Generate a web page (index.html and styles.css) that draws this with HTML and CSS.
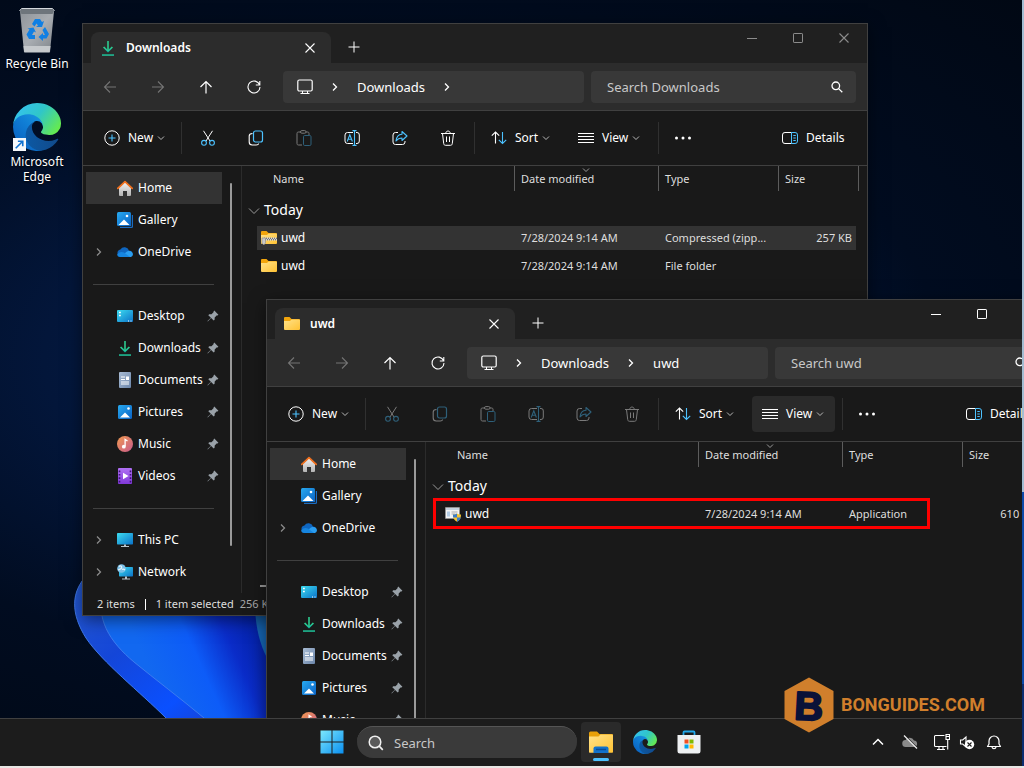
FILE: index.html
```html
<!DOCTYPE html>
<html lang="en">
<head>
<meta charset="utf-8">
<title>Desktop</title>
<link rel="stylesheet" href="styles.css">
</head>
<body>
<svg class="defs" aria-hidden="true">
  <defs>
    <linearGradient id="g-dl" x1="0" y1="0" x2="0" y2="1"><stop offset="0" stop-color="#2fcf8c"/><stop offset="1" stop-color="#12b3a0"/></linearGradient>
    <linearGradient id="g-folder" x1="0" y1="0" x2="1" y2="1"><stop offset="0" stop-color="#ffe28a"/><stop offset="1" stop-color="#ffc233"/></linearGradient>
    <linearGradient id="g-blue" x1="0" y1="0" x2="1" y2="1"><stop offset="0" stop-color="#28aaf0"/><stop offset="1" stop-color="#0a62c4"/></linearGradient>
    <linearGradient id="g-cyan" x1="0" y1="0" x2="1" y2="1"><stop offset="0" stop-color="#3ddcf0"/><stop offset="1" stop-color="#0b72c8"/></linearGradient>
    <linearGradient id="g-home" x1="0" y1="0" x2="0" y2="1"><stop offset="0" stop-color="#f2f2f2"/><stop offset="1" stop-color="#b4b4b4"/></linearGradient>
    <linearGradient id="g-music" x1="0" y1="0" x2="1" y2="1"><stop offset="0" stop-color="#f09a50"/><stop offset="1" stop-color="#c85a8c"/></linearGradient>
    <linearGradient id="g-video" x1="0" y1="0" x2="0" y2="1"><stop offset="0" stop-color="#b070f4"/><stop offset="1" stop-color="#8038d8"/></linearGradient>
    <linearGradient id="g-doc" x1="0" y1="0" x2="1" y2="1"><stop offset="0" stop-color="#a9bcd4"/><stop offset="1" stop-color="#6c86aa"/></linearGradient>
    <linearGradient id="g-e1" x1="0" y1="0.5" x2="1" y2="0.5"><stop offset="0" stop-color="#0c59a4"/><stop offset="1" stop-color="#114a8b"/></linearGradient>
    <linearGradient id="g-e2" x1="1" y1="0" x2="0.2" y2="1"><stop offset="0" stop-color="#1b9de2"/><stop offset="0.5" stop-color="#0f7cd4"/><stop offset="1" stop-color="#0a5fbd"/></linearGradient>
    <linearGradient id="g-e3" x1="0" y1="0.2" x2="1" y2="0.7"><stop offset="0" stop-color="#35c1f1"/><stop offset="0.5" stop-color="#30c6c8"/><stop offset="1" stop-color="#66eb4e"/></linearGradient>
    <linearGradient id="g-win" x1="0" y1="0" x2="1" y2="1"><stop offset="0" stop-color="#7ce8fc"/><stop offset="1" stop-color="#0a8ff0"/></linearGradient>
    <linearGradient id="g-bin" x1="0" y1="0" x2="1" y2="1"><stop offset="0" stop-color="#8e9399"/><stop offset="0.5" stop-color="#a9adb2"/><stop offset="1" stop-color="#7f848a"/></linearGradient>
    <linearGradient id="g-p2" x1="0" y1="0" x2="1" y2="1"><stop offset="0" stop-color="#2a5fd0"/><stop offset="0.4" stop-color="#1446d8"/><stop offset="0.7" stop-color="#0a50ff"/><stop offset="1" stop-color="#2238b0"/></linearGradient>
    <linearGradient id="g-p3" gradientUnits="userSpaceOnUse" x1="75" y1="110" x2="185" y2="60"><stop offset="0" stop-color="#1268f0"/><stop offset="0.4" stop-color="#0d5cf8"/><stop offset="0.7" stop-color="#0a2cc8"/><stop offset="1" stop-color="#0420a0"/></linearGradient>
  </defs>
  <symbol id="i-download" viewBox="0 0 16 16"><path d="M3.600 7 8 11.400 12.400 7" fill="none" stroke="url(#g-dl)" stroke-width="1.700"/><path d="M2 14.300h12v1.500H2z" fill="#1fc39a"/><path d="M7.200 1h1.600v10H7.200z" fill="#2ccc90"/></symbol>
  <symbol id="i-folder" viewBox="0 0 16 16"><path d="M0 2a1 1 0 0 1 1-1h4.500l2 2H15a1 1 0 0 1 1 1V8H0z" fill="#f2a50c"/><path d="M0 5h6l1.500-1.500H15a1 1 0 0 1 1 1V13a1 1 0 0 1-1 1H1a1 1 0 0 1-1-1z" fill="url(#g-folder)"/></symbol>
  <symbol id="i-zip" viewBox="0 0 16 16"><use href="#i-folder"/><path d="M2 9h14" stroke="#777" stroke-width="2.600"/><path d="M2 8.200h14M3 9.800h13" stroke="#f2f2f2" stroke-width="1.200" stroke-dasharray="1 1"/><path d="M1 8h3.500v5l-1.700 2L1 13z" fill="#c9c9c9" stroke="#888" stroke-width=".6"/></symbol>
  <symbol id="i-exe" viewBox="0 0 16 16"><path d="M.5 1.500h14v11H.5z" fill="#f4f4f4" stroke="#999" stroke-width=".6"/><path d="M1 2h13v2H1z" fill="#c6d2de"/><path d="M2 5.500h3v5H2z" fill="#b4cce4"/><path d="M6.500 6h6M6.500 8h4" stroke="#aaa"/><path d="M12 7.500c1.300 1 2.600 1 4 1 0 3.500-1.200 6-4 7.300-2.800-1.300-4-3.800-4-7.300 1.400 0 2.700 0 4-1z" fill="#f4c430"/><path d="M12 7.500v4H8.200A9 9 0 0 1 8 8.500c1.400 0 2.700 0 4-1zM12 11.500h3.800c-.6 2-1.800 3.500-3.800 4.300z" fill="#3b7bc8"/></symbol>
  <symbol id="i-home" viewBox="0 0 16 16"><path d="M2 7.500 8 2l6 5.500V15a1 1 0 0 1-1 1h-3v-5H6v5H3a1 1 0 0 1-1-1z" fill="url(#g-home)"/><path d="M.8 8.300 8 1.600l7.200 6.700" fill="none" stroke="#f0701e" stroke-width="1.800" stroke-linecap="round" stroke-linejoin="round"/></symbol>
  <symbol id="i-gallery" viewBox="0 0 16 16"><path d="M3 3h13v11.500a1.500 1.500 0 0 1-1.500 1.500H3z" fill="#1c6cc0"/><path d="M14.500 2v12.500H2" fill="none" stroke="#191919" stroke-width=".8"/><rect width="14" height="14" rx="1.500" fill="url(#g-blue)"/><path d="M1.500 13 7 7.500l5.500 5.500z" fill="#fff"/><circle cx="10" cy="4" r="1.300" fill="#fff"/></symbol>
  <symbol id="i-picture" viewBox="0 0 16 16"><rect x="1" y="1" width="14" height="14" rx="1.500" fill="url(#g-blue)"/><path d="M3 13.500 8 8.500l5 5z" fill="#fff"/><circle cx="11.500" cy="4.500" r="1.300" fill="#fff"/></symbol>
  <symbol id="i-cloud" viewBox="0 0 16 16"><path d="M4 13a3.800 3.800 0 0 1-.6-7.500A4.800 4.800 0 0 1 12 6.500a3.300 3.300 0 0 1 .6 6.500z" fill="#0f66c0"/><path d="M3 13 10 7.500c4.500-1.500 6.500 1.500 5.800 3.500-.4 1.400-1.400 2-3 2z" fill="#2a9df0"/><path d="M3.500 13C1 13 .2 11.500.2 10.500 2 7.500 5 7.500 7 8.500l6 4.500z" fill="#1685e0"/></symbol>
  <symbol id="i-desktop" viewBox="0 0 16 16"><rect y="2" width="16" height="12" rx="1" fill="url(#g-cyan)"/><path d="M2 4.500h1.800M2 7.500h1.800" stroke="#fff" stroke-width="1.600"/><path d="M11 13h1M13.500 13h1" stroke="#fff"/></symbol>
  <symbol id="i-doc" viewBox="0 0 16 16"><rect x="2" y="0" width="12" height="16" rx="1" fill="url(#g-doc)"/><path d="M4 5h4M4 7.500h4M4 10h8M4 12h8" stroke="#fff"/><path d="M9 4.500h3V8H9z" fill="#fff"/></symbol>
  <symbol id="i-music" viewBox="0 0 16 16"><circle cx="8" cy="8" r="8" fill="url(#g-music)"/><circle cx="6.800" cy="10.700" r="1.900" fill="#fff"/><path d="M8.100 10.500V3.500l2.400 1.500" fill="none" stroke="#fff" stroke-width="1.300"/></symbol>
  <symbol id="i-video" viewBox="0 0 16 16"><rect x="1" width="14" height="16" rx="1" fill="url(#g-video)"/><path d="M2.500 2.500v12M13.500 2.500v12" stroke="#3d1572" stroke-width="1.600" stroke-dasharray="1.700 1.700"/><path d="M6 4.800 11.500 8 6 11.200z" fill="#fff"/></symbol>
  <symbol id="i-pc" viewBox="0 0 16 16"><rect y="1" width="16" height="11.500" rx=".7" fill="url(#g-cyan)"/><path d="M7 12.500h2V14H7zM4 14h8v1H4z" fill="#b9c4cc"/></symbol>
  <symbol id="i-network" viewBox="0 0 16 16"><rect x="2" y="3" width="14" height="9.500" rx=".7" fill="url(#g-cyan)"/><path d="M8 12.500h2V14.500H8zM5 14.500h8v1H5z" fill="#b9c4cc"/><circle cx="4.500" cy="4.500" r="4.300" fill="#7cc0e8"/><path d="M2 2.500c2-1.500 3 0 2.500 1.500S2 5 1 6M5 5.500c1-.5 2.500 0 3 .5" stroke="#e4f4fc" stroke-width="1.300" fill="none"/></symbol>
  <symbol id="i-pin" viewBox="0 0 12 12"><path d="M7.300.6 11.400 4.700 10.600 5.500 9.900 5.300 7.700 7.500 7.600 9.700 6.700 10.600 4.100 8 .8 11.400.5 11.100 3.900 7.800 1.300 5.200 2.200 4.300 4.500 4.200 6.700 2 6.500 1.400z" fill="#9aa2a9"/></symbol>
  <symbol id="i-right" viewBox="0 0 8 12"><path d="m2 2.500 3.500 3.500L2 9.500" fill="none" stroke="currentColor" stroke-width="1.300"/></symbol>
  <symbol id="i-down" viewBox="0 0 8 8"><path d="m1 2.500 3 3 3-3" fill="none" stroke="currentColor"/></symbol>
  <symbol id="i-close" viewBox="0 0 12 12"><path d="m1.500 1.500 9 9m0-9-9 9" stroke="currentColor" stroke-width="1.100"/></symbol>
  <symbol id="i-plus" viewBox="0 0 12 12"><path d="M6 .5v11M.5 6h11" stroke="currentColor"/></symbol>
  <symbol id="i-min" viewBox="0 0 12 12"><path d="M1 6.500h10" stroke="currentColor"/></symbol>
  <symbol id="i-max" viewBox="0 0 12 12"><rect x="1.500" y="1.500" width="9" height="9" rx=".6" fill="none" stroke="currentColor"/></symbol>
  <symbol id="i-back" viewBox="0 0 16 16"><path d="M14 8H2.500M8 2.500 2.500 8 8 13.500" fill="none" stroke="currentColor" stroke-width="1.100"/></symbol>
  <symbol id="i-fwd" viewBox="0 0 16 16"><path d="M2 8h11.500M8 2.500 13.500 8 8 13.500" fill="none" stroke="currentColor" stroke-width="1.100"/></symbol>
  <symbol id="i-up" viewBox="0 0 16 16"><path d="M8 14.500V2.500M2.500 8 8 2.500 13.500 8" fill="none" stroke="currentColor" stroke-width="1.200"/></symbol>
  <symbol id="i-refresh" viewBox="0 0 16 16"><path d="M13.600 5.800A6 6 0 1 0 14 8M13.800 2v4h-4" fill="none" stroke="currentColor" stroke-width="1.100"/></symbol>
  <symbol id="i-monitor" viewBox="0 0 16 16"><rect x=".8" y="1" width="14.400" height="11" rx="1.500" fill="none" stroke="currentColor" stroke-width="1.200"/><path d="M5.500 12v2.500M10.500 12v2.500M3.500 14.500h9" stroke="currentColor" fill="none"/></symbol>
  <symbol id="i-search" viewBox="0 0 12 12"><circle cx="4.800" cy="4.800" r="3.800" fill="none" stroke="currentColor" stroke-width="1.300"/><path d="m7.600 7.600 3.700 3.700" stroke="currentColor" stroke-width="1.300"/></symbol>
  <symbol id="i-new" viewBox="0 0 16 16"><circle cx="8" cy="8" r="7.200" fill="none" stroke="currentColor"/><path d="M8 4.500v7M4.500 8h7" stroke="#4cc2ff" stroke-width="1.100"/></symbol>
  <symbol id="i-cut" viewBox="0 0 16 16"><path d="M3.500.8 10 11M12.500.8 6 11" stroke="currentColor" fill="none"/><circle cx="4" cy="12.800" r="2.400" fill="none" stroke="#4cc2ff" stroke-width="1.100"/><circle cx="12" cy="12.800" r="2.400" fill="none" stroke="#4cc2ff" stroke-width="1.100"/></symbol>
  <symbol id="i-copy" viewBox="0 0 16 16"><path d="M4.500 3.500C2 3.500 1.200 4.500 1.200 6v6c0 2 1 3 3 3h4c1.500 0 2.300-.5 2.500-1.500" fill="none" stroke="currentColor" stroke-width="1.100"/><rect x="5.500" y="1" width="9" height="11" rx="2" fill="none" stroke="#4cc2ff" stroke-width="1.200"/></symbol>
  <symbol id="i-paste" viewBox="0 0 16 16"><path d="M5 2H2.500C1.500 2 1 2.500 1 3.500v10c0 1 .5 1.500 1.500 1.500H6M10 2h1.500c1 0 1.500.5 1.500 1.500V5" fill="none" stroke="currentColor"/><rect x="4.500" y=".6" width="5.500" height="2.600" rx="1.300" fill="none" stroke="currentColor"/><rect x="7.500" y="5.500" width="7.500" height="10" rx="1.200" fill="none" stroke="#4cc2ff"/></symbol>
  <symbol id="i-rename" viewBox="0 0 16 16"><path d="M9 2.500H3.500A2.500 2.500 0 0 0 1 5v6a2.500 2.500 0 0 0 2.500 2.500H9M12 2.500h1A2.300 2.300 0 0 1 15.300 5v6a2.300 2.300 0 0 1-2.300 2.500h-1" fill="none" stroke="currentColor"/><path d="M10.500 1v14M8.500.6h4M8.500 15.400h4M3.200 11.500 5.800 4.800l2.600 6.700M4.200 9.300h3.200" fill="none" stroke="#4cc2ff" stroke-width="1.100"/></symbol>
  <symbol id="i-share" viewBox="0 0 16 16"><path d="M6 2.500H3.500A2.500 2.500 0 0 0 1 5v7a2.500 2.500 0 0 0 2.500 2.500h7A2.500 2.500 0 0 0 13 12v-1" fill="none" stroke="currentColor"/><path d="M10 1.500 15 6l-5 4.500V8c-3 0-4.500 1-6 3 .3-3.500 2-6.500 6-6.800z" fill="none" stroke="#4cc2ff" stroke-width="1.100" stroke-linejoin="round"/></symbol>
  <symbol id="i-trash" viewBox="0 0 16 16"><path d="M1 3.500h14M5.800 3.300c0-3 4.400-3 4.400 0M2.500 3.500l1.200 10c.1 1.200.8 1.800 1.800 1.800h5c1 0 1.700-.6 1.800-1.800l1.200-10M6.500 6.500v5.500M9.500 6.500v5.500" fill="none" stroke="currentColor"/></symbol>
  <symbol id="i-sort" viewBox="0 0 16 16"><path d="M4.500 13.500V2M.8 5.700 4.500 2l3.700 3.700" fill="none" stroke="currentColor" stroke-width="1.100"/><path d="M11.500 2v11.500M7.800 9.800l3.700 3.700 3.700-3.700" fill="none" stroke="#4cc2ff" stroke-width="1.100"/></symbol>
  <symbol id="i-view" viewBox="0 0 16 16"><path d="M0 3.500h16M0 6.500h16M0 9.500h16M0 12.500h16" stroke="currentColor"/></symbol>
  <symbol id="i-more" viewBox="0 0 16 16"><circle cx="1.500" cy="8" r="1.500" fill="currentColor"/><circle cx="8" cy="8" r="1.500" fill="currentColor"/><circle cx="14.500" cy="8" r="1.500" fill="currentColor"/></symbol>
  <symbol id="i-details" viewBox="0 0 16 16"><path d="M9.500 2.500H3A2.400 2.400 0 0 0 .5 5v6A2.400 2.400 0 0 0 3 13.500h6.500" fill="none" stroke="currentColor"/><path d="M9.500 2.500H13A2.400 2.400 0 0 1 15.500 5v6a2.400 2.400 0 0 1-2.500 2.500H9.500zM11.300 5.500h2.500M11.300 8h2.500M11.300 10.500h2.500" fill="none" stroke="#4cc2ff"/></symbol>
  <symbol id="i-edge" viewBox="0 0 256 256"><path fill="url(#g-e1)" d="M235.680 190.890a93.730 93.730 0 0 1-10.540 4.710 101.870 101.870 0 0 1-35.900 6.460c-47.320 0-88.540-32.550-88.540-74.320A31.480 31.480 0 0 1 117.130 100.300c-42.800 1.800-53.800 46.400-53.800 72.530 0 73.880 68.090 81.370 82.760 81.370 7.910 0 19.840-2.300 27-4.560l1.310-.44a128.340 128.340 0 0 0 66.600-52.800 4 4 0 0 0-5.320-5.510z"/><path fill="url(#g-e2)" d="M105.730 241.420a79.200 79.200 0 0 1-22.740-21.340 80.720 80.720 0 0 1 29.530-120c3.120-1.470 8.450-4.130 15.540-4a32.350 32.350 0 0 1 25.690 13 31.880 31.880 0 0 1 6.360 18.660c0-.21 24.460-79.600-80-79.600-43.900 0-80 41.660-80 78.210a130.150 130.150 0 0 0 12.110 56 128 128 0 0 0 156.380 67.110 75.550 75.550 0 0 1-62.780-8z"/><path fill="url(#g-e3)" d="M152.330 148.860c-.81 1.050-3.300 2.500-3.300 5.660 0 2.610 1.700 5.120 4.720 7.230 14.380 10 41.490 8.680 41.560 8.680a59.560 59.560 0 0 0 30.270-8.350 61.380 61.380 0 0 0 30.430-52.880c.26-22.410-8-37.310-11.340-43.910C223.460 23.840 177.720 0 128 0A128 128 0 0 0 0 126.200c.48-36.540 36.800-66.050 80-66.050 3.500 0 23.460.34 42 10.070 16.340 8.580 24.900 18.940 30.850 29.210 6.180 10.670 7.280 24.150 7.280 29.520s-2.740 13.330-7.800 19.910z"/></symbol>
</svg>

<div class="screen">
  <main class="desktop">
    <svg class="bloom" viewBox="0 0 200 160" aria-hidden="true">
      <path d="M14 16C-4 34-3 56 12 80c16 24 54 54 80 80h108V0z" fill="url(#g-p2)"/>
      <path d="M30 30C20 60 36 84 60 104c22 18 46 36 70 56h70V0z" fill="url(#g-p3)"/>
      <path d="M14 16C-4 34-3 56 12 80c16 24 54 54 80 80" fill="none" stroke="#3f78e8"/>
      <path d="M30 30C20 60 36 84 60 104c22 18 46 36 70 56" fill="none" stroke="#3c7cf0"/>
      <path d="M181 50c1 22 5 36 12 50V50z" fill="#1668b8"/>
    </svg>

    <div class="shortcuts">
      <a class="shortcut" href="#bin">
        <svg class="ic48" viewBox="0 0 48 48"><path d="M7 4 11 45h26L41 4z" fill="url(#g-bin)"/><path d="M10.500 39 11.300 45.500h25.400L37.500 39z" fill="#c6c9cc"/><path d="M7 4 9 1.500h30L41 4l-1.500 3h-31z" fill="#6e757c"/><path d="M6.500 4 8.500 1.500h31l2 2.500" fill="none" stroke="#d4d8dc"/><g fill="#0f7fe4"><path d="m19 17 3-5h5l2 3 2-1-2 6h-6l2-1.500-1.500-2-2 3z"/><path d="m32 20 4 7-2.500 4.500H30V34l-4.500-4 4.500-4v2h2l-2.500-5z"/><path d="m22 32h-6l-2.500-4.500 3-5-2-1 6-1 2.500 5-2-1-2 3.500h3z"/></g></svg>
        <span>Recycle Bin</span>
      </a>
      <a class="shortcut" href="#edge">
        <span class="badged"><svg class="ic48"><use href="#i-edge"/></svg><svg class="arrow" viewBox="0 0 12 12"><path d="M0 0h12v12H0z" fill="#f6f8fa"/><path d="M2.500 9.500 9 3M4.500 3H9v4.500" fill="none" stroke="#1072d0" stroke-width="1.500"/></svg></span>
        <span>Microsoft<br>Edge</span>
      </a>
    </div>

    <section class="window window-back" aria-label="Downloads">
      <header class="titlebar">
        <div class="tab"><svg class="ic16"><use href="#i-download"/></svg><span class="tab-name">Downloads</span><button class="bare" aria-label="Close tab"><svg class="ic12"><use href="#i-close"/></svg></button></div>
        <button class="bare add" aria-label="New tab"><svg class="ic12"><use href="#i-plus"/></svg></button>
        <div class="caption"><button class="bare" aria-label="Minimize"><svg class="ic12"><use href="#i-min"/></svg></button><button class="bare" aria-label="Maximize"><svg class="ic12"><use href="#i-max"/></svg></button><button class="bare" aria-label="Close"><svg class="ic12"><use href="#i-close"/></svg></button></div>
      </header>
      <div class="navbar">
        <button class="bare dim" aria-label="Back"><svg class="ic16"><use href="#i-back"/></svg></button>
        <button class="bare dim" aria-label="Forward"><svg class="ic16"><use href="#i-fwd"/></svg></button>
        <button class="bare" aria-label="Up"><svg class="ic16"><use href="#i-up"/></svg></button>
        <button class="bare" aria-label="Refresh"><svg class="ic16"><use href="#i-refresh"/></svg></button>
        <nav class="address" aria-label="Path"><svg class="ic16"><use href="#i-monitor"/></svg><svg class="crumb"><use href="#i-right"/></svg><a href="#dl">Downloads</a><svg class="crumb"><use href="#i-right"/></svg></nav>
        <label class="find"><input type="text" placeholder="Search Downloads" aria-label="Search Downloads"><svg class="ic12"><use href="#i-search"/></svg></label>
      </div>
      <div class="toolbar">
        <button class="tool tool-new"><svg class="ic16"><use href="#i-new"/></svg>New<svg class="ic8"><use href="#i-down"/></svg></button>
        <span class="rule"></span>
        <div class="icons">
          <button class="bare" aria-label="Cut"><svg class="ic16"><use href="#i-cut"/></svg></button>
          <button class="bare" aria-label="Copy"><svg class="ic16"><use href="#i-copy"/></svg></button>
          <button class="bare off" aria-label="Paste"><svg class="ic16"><use href="#i-paste"/></svg></button>
          <button class="bare" aria-label="Rename"><svg class="ic16"><use href="#i-rename"/></svg></button>
          <button class="bare" aria-label="Share"><svg class="ic16"><use href="#i-share"/></svg></button>
          <button class="bare" aria-label="Delete"><svg class="ic16"><use href="#i-trash"/></svg></button>
        </div>
        <span class="rule"></span>
        <button class="tool tool-sort"><svg class="ic16"><use href="#i-sort"/></svg>Sort<svg class="ic8"><use href="#i-down"/></svg></button>
        <button class="tool tool-view"><svg class="ic16"><use href="#i-view"/></svg>View<svg class="ic8"><use href="#i-down"/></svg></button>
        <span class="rule"></span>
        <button class="bare more" aria-label="More"><svg class="ic16"><use href="#i-more"/></svg></button>
        <button class="tool tool-details"><svg class="ic16"><use href="#i-details"/></svg>Details</button>
      </div>
      <div class="body">
        <aside class="side">
          <nav class="places">
            <a class="place on" href="#"><span class="twist"></span><svg class="ic16"><use href="#i-home"/></svg><span class="place-name">Home</span></a>
            <a class="place" href="#"><span class="twist"></span><svg class="ic16"><use href="#i-gallery"/></svg><span class="place-name">Gallery</span></a>
            <a class="place" href="#"><span class="twist"><svg class="crumb"><use href="#i-right"/></svg></span><svg class="ic16"><use href="#i-cloud"/></svg><span class="place-name">OneDrive</span></a>
            <hr>
            <a class="place" href="#"><span class="twist"></span><svg class="ic16"><use href="#i-desktop"/></svg><span class="place-name">Desktop</span><svg class="ic12"><use href="#i-pin"/></svg></a>
            <a class="place" href="#"><span class="twist"></span><svg class="ic16"><use href="#i-download"/></svg><span class="place-name">Downloads</span><svg class="ic12"><use href="#i-pin"/></svg></a>
            <a class="place" href="#"><span class="twist"></span><svg class="ic16"><use href="#i-doc"/></svg><span class="place-name">Documents</span><svg class="ic12"><use href="#i-pin"/></svg></a>
            <a class="place" href="#"><span class="twist"></span><svg class="ic16"><use href="#i-picture"/></svg><span class="place-name">Pictures</span><svg class="ic12"><use href="#i-pin"/></svg></a>
            <a class="place" href="#"><span class="twist"></span><svg class="ic16"><use href="#i-music"/></svg><span class="place-name">Music</span><svg class="ic12"><use href="#i-pin"/></svg></a>
            <a class="place" href="#"><span class="twist"></span><svg class="ic16"><use href="#i-video"/></svg><span class="place-name">Videos</span><svg class="ic12"><use href="#i-pin"/></svg></a>
            <hr>
            <a class="place" href="#"><span class="twist"><svg class="crumb"><use href="#i-right"/></svg></span><svg class="ic16"><use href="#i-pc"/></svg><span class="place-name">This PC</span></a>
            <a class="place" href="#"><span class="twist"><svg class="crumb"><use href="#i-right"/></svg></span><svg class="ic16"><use href="#i-network"/></svg><span class="place-name">Network</span></a>
          </nav>
          <span class="vbar"></span>
        </aside>
        <div class="files">
          <table>
            <colgroup><col><col class="c-date"><col class="c-type"><col class="c-size"></colgroup>
            <thead><tr><th>Name</th><th class="sorted">Date modified<svg class="ic8"><use href="#i-down"/></svg></th><th>Type</th><th>Size</th></tr></thead>
            <tbody>
              <tr class="group"><td colspan="4"><svg class="ic12" viewBox="0 0 12 12"><path d="m1 3.500 5 5 5-5" fill="none" stroke="#9a9a9a"/></svg>Today</td></tr>
              <tr class="hot"><td><svg class="ic16"><use href="#i-zip"/></svg>uwd</td><td>7/28/2024 9:14 AM</td><td>Compressed (zipp...</td><td>257 KB</td></tr>
              <tr><td><svg class="ic16"><use href="#i-folder"/></svg>uwd</td><td>7/28/2024 9:14 AM</td><td>File folder</td><td></td></tr>
            </tbody>
          </table>
          <span class="hbar"></span>
        </div>
      </div>
      <footer class="status"><span>2 items</span><span class="tick"></span><span>1 item selected</span><span class="faint">256 KB</span></footer>
    </section>

    <section class="window window-front" aria-label="uwd">
      <header class="titlebar">
        <div class="tab"><svg class="ic16"><use href="#i-folder"/></svg><span class="tab-name">uwd</span><button class="bare" aria-label="Close tab"><svg class="ic12"><use href="#i-close"/></svg></button></div>
        <button class="bare add" aria-label="New tab"><svg class="ic12"><use href="#i-plus"/></svg></button>
        <div class="caption"><button class="bare" aria-label="Minimize"><svg class="ic12"><use href="#i-min"/></svg></button><button class="bare" aria-label="Maximize"><svg class="ic12"><use href="#i-max"/></svg></button><button class="bare" aria-label="Close"><svg class="ic12"><use href="#i-close"/></svg></button></div>
      </header>
      <div class="navbar">
        <button class="bare dim" aria-label="Back"><svg class="ic16"><use href="#i-back"/></svg></button>
        <button class="bare dim" aria-label="Forward"><svg class="ic16"><use href="#i-fwd"/></svg></button>
        <button class="bare" aria-label="Up"><svg class="ic16"><use href="#i-up"/></svg></button>
        <button class="bare" aria-label="Refresh"><svg class="ic16"><use href="#i-refresh"/></svg></button>
        <nav class="address" aria-label="Path"><svg class="ic16"><use href="#i-monitor"/></svg><svg class="crumb"><use href="#i-right"/></svg><a href="#dl">Downloads</a><svg class="crumb"><use href="#i-right"/></svg><a href="#uwd">uwd</a></nav>
        <label class="find"><input type="text" placeholder="Search uwd" aria-label="Search uwd"><svg class="ic12"><use href="#i-search"/></svg></label>
      </div>
      <div class="toolbar">
        <button class="tool tool-new"><svg class="ic16"><use href="#i-new"/></svg>New<svg class="ic8"><use href="#i-down"/></svg></button>
        <span class="rule"></span>
        <div class="icons">
          <button class="bare off" aria-label="Cut"><svg class="ic16"><use href="#i-cut"/></svg></button>
          <button class="bare off" aria-label="Copy"><svg class="ic16"><use href="#i-copy"/></svg></button>
          <button class="bare off" aria-label="Paste"><svg class="ic16"><use href="#i-paste"/></svg></button>
          <button class="bare off" aria-label="Rename"><svg class="ic16"><use href="#i-rename"/></svg></button>
          <button class="bare off" aria-label="Share"><svg class="ic16"><use href="#i-share"/></svg></button>
          <button class="bare off" aria-label="Delete"><svg class="ic16"><use href="#i-trash"/></svg></button>
        </div>
        <span class="rule"></span>
        <button class="tool tool-sort"><svg class="ic16"><use href="#i-sort"/></svg>Sort<svg class="ic8"><use href="#i-down"/></svg></button>
        <button class="tool tool-view hover"><svg class="ic16"><use href="#i-view"/></svg>View<svg class="ic8"><use href="#i-down"/></svg></button>
        <span class="rule"></span>
        <button class="bare more" aria-label="More"><svg class="ic16"><use href="#i-more"/></svg></button>
        <button class="tool tool-details"><svg class="ic16"><use href="#i-details"/></svg>Details</button>
      </div>
      <div class="body">
        <aside class="side">
          <nav class="places">
            <a class="place on" href="#"><span class="twist"></span><svg class="ic16"><use href="#i-home"/></svg><span class="place-name">Home</span></a>
            <a class="place" href="#"><span class="twist"></span><svg class="ic16"><use href="#i-gallery"/></svg><span class="place-name">Gallery</span></a>
            <a class="place" href="#"><span class="twist"><svg class="crumb"><use href="#i-right"/></svg></span><svg class="ic16"><use href="#i-cloud"/></svg><span class="place-name">OneDrive</span></a>
            <hr>
            <a class="place" href="#"><span class="twist"></span><svg class="ic16"><use href="#i-desktop"/></svg><span class="place-name">Desktop</span><svg class="ic12"><use href="#i-pin"/></svg></a>
            <a class="place" href="#"><span class="twist"></span><svg class="ic16"><use href="#i-download"/></svg><span class="place-name">Downloads</span><svg class="ic12"><use href="#i-pin"/></svg></a>
            <a class="place" href="#"><span class="twist"></span><svg class="ic16"><use href="#i-doc"/></svg><span class="place-name">Documents</span><svg class="ic12"><use href="#i-pin"/></svg></a>
            <a class="place" href="#"><span class="twist"></span><svg class="ic16"><use href="#i-picture"/></svg><span class="place-name">Pictures</span><svg class="ic12"><use href="#i-pin"/></svg></a>
            <a class="place" href="#"><span class="twist"></span><svg class="ic16"><use href="#i-music"/></svg><span class="place-name">Music</span><svg class="ic12"><use href="#i-pin"/></svg></a>
          </nav>
          <span class="vbar"></span>
        </aside>
        <div class="files">
          <table>
            <colgroup><col><col class="c-date"><col class="c-type"><col class="c-size"></colgroup>
            <thead><tr><th>Name</th><th class="sorted">Date modified<svg class="ic8"><use href="#i-down"/></svg></th><th>Type</th><th>Size</th></tr></thead>
            <tbody>
              <tr class="group"><td colspan="4"><svg class="ic12" viewBox="0 0 12 12"><path d="m1 3.500 5 5 5-5" fill="none" stroke="#9a9a9a"/></svg>Today</td></tr>
              <tr><td><svg class="ic16"><use href="#i-exe"/></svg>uwd</td><td>7/28/2024 9:14 AM</td><td>Application</td><td>610 KB</td></tr>
            </tbody>
          </table>
        </div>
      </div>
    </section>

    <div class="marker"></div>
  </main>

  <footer class="taskbar">
    <div class="dock">
      <button class="bare" aria-label="Start"><svg class="ic24" viewBox="0 0 24 24"><path d="M.5.5h11v11H.5zM12.500.5h11v11h-11zM.5 12.500h11v11H.5zM12.500 12.500h11v11h-11z" fill="url(#g-win)"/></svg></button>
      <label class="tasksearch"><svg class="ic16" viewBox="0 0 16 16"><circle cx="7" cy="7" r="5.800" fill="#5a5a5a" stroke="#f0f0f0" stroke-width="1.500"/><path d="m11.200 11.200 3.600 3.600" stroke="#f0f0f0" stroke-width="1.700"/></svg><input type="text" placeholder="Search" aria-label="Search"></label>
      <button class="bare app running" aria-label="File Explorer"><svg class="ic24" viewBox="0 0 24 24"><path d="M0 3a1.500 1.500 0 0 1 1.500-1.500H8L10.500 4H23a1 1 0 0 1 1 1v5H0z" fill="#e8a008"/><path d="M0 6.500h9.500L11.500 4.500H23a1 1 0 0 1 1 1V22a.8.8 0 0 1-.8.8H.8A.8.8 0 0 1 0 22z" fill="url(#g-folder)"/><path d="M4.500 23v-4.500A2 2 0 0 1 6.500 16.500h11a2 2 0 0 1 2 2V23z" fill="#1273cc"/><path d="M7 19.500h10" stroke="#0a4c98" stroke-width="1.500"/></svg></button>
      <button class="bare app" aria-label="Edge"><svg class="ic24"><use href="#i-edge"/></svg></button>
      <button class="bare app" aria-label="Store"><svg class="ic24" viewBox="0 0 24 24"><path d="M6.500 6V2.500A1 1 0 0 1 7.500 1.500h9a1 1 0 0 1 1 1V6" fill="none" stroke="#22a8ea" stroke-width="1.800"/><path d="M.5 5h23v16a2.500 2.500 0 0 1-2.500 2.500H3A2.500 2.500 0 0 1 .5 21z" fill="#eef0f2"/><path d="M7.500 9.500h4v4h-4z" fill="#f25022"/><path d="M12.500 9.500h4v4h-4z" fill="#7fba00"/><path d="M7.500 14.500h4v4h-4z" fill="#00a4ef"/><path d="M12.500 14.500h4v4h-4z" fill="#ffb900"/></svg></button>
    </div>
    <div class="tray">
      <button class="bare" aria-label="Hidden icons"><svg class="ic12" viewBox="0 0 12 12"><path d="m1 8.500 5-5 5 5" fill="none" stroke="#fff" stroke-width="1.500"/></svg></button>
      <button class="bare" aria-label="OneDrive"><svg class="ic16" viewBox="0 0 16 16"><path d="M4 13a3.500 3.500 0 0 1-.5-7A4.800 4.800 0 0 1 12 6.500a3.300 3.300 0 0 1 .6 6.500z" fill="#8a8a8a"/><path d="m2.800 1.500 13 13" stroke="#1c1c1c" stroke-width="1.200"/><path d="m2 1.500 13 13" stroke="#eee" stroke-width="1.200"/></svg></button>
      <button class="bare" aria-label="Network"><svg class="ic16" viewBox="0 0 16 16"><path d="M10.500 1.500h-9a1 1 0 0 0-1 1v9a1 1 0 0 0 1 1h11M5 12.500v3M9 12.500v3M3 15.500h8M12 .5h3.500v5H12zM12 2.500h3.500M13.700 5.500v10" fill="none" stroke="#fff" stroke-width="1.100"/></svg></button>
      <button class="bare volume" aria-label="Volume"><svg class="ic16" viewBox="0 0 16 16"><path d="M1.500 6v4h2.200L7 13V3L3.700 6z" fill="none" stroke="#fff" stroke-width="1.100"/><circle cx="10.500" cy="10.500" r="4.700" fill="#fff"/><path d="m8.500 8.500 4 4m0-4-4 4" stroke="#1c1c1c" stroke-width="1.100"/></svg></button>
      <button class="bare" aria-label="Notifications"><svg class="ic16" viewBox="0 0 16 16"><path d="M3 7a5 5 0 0 1 10 0v3l1.500 2.500h-13L3 10zM6 13c.3 2.200 3.700 2.200 4 0" fill="none" stroke="#fff" stroke-width="1.200" stroke-linejoin="round"/></svg></button>
    </div>
  </footer>

  <div class="brand">
    <svg class="hex" viewBox="0 0 50 56"><path d="M25 .5 49.500 14v28L25 55.500.5 42V14z" fill="#d07f2c"/><text class="hex-letter" x="25" y="43" text-anchor="middle" transform="rotate(3 25 28)">B</text></svg>
    <span>BONGUIDES.COM</span>
  </div>
</div>
</body>
</html>
```

FILE: styles.css
```css
* { box-sizing: border-box; }
body {
  margin: 0;
  min-height: 100vh;
  display: flex;
  background: linear-gradient(#a3bdd2 0 64%, #0b49a8 64% 89%, #0a2d70 89%);
  border-bottom: 2px solid #e8e6e4;
  color: #fff;
  font: 12px/16px "Noto Sans", "Open Sans", sans-serif;
}
button, input { font: inherit; color: inherit; background: none; border: 0; padding: 0; margin: 0; outline: 0; }
a { color: inherit; text-decoration: none; }
svg { display: block; flex: none; }
.defs { position: absolute; width: 0; height: 0; }
.ic8 { width: 8px; height: 8px; }
.ic12 { width: 12px; height: 12px; }
.ic16 { width: 16px; height: 16px; }
.ic24 { width: 24px; height: 24px; }
.ic48 { width: 48px; height: 48px; }
.crumb { width: 8px; height: 12px; }

.screen { position: relative; flex: 1; margin-right: 2px; display: flex; flex-direction: column; overflow: hidden; }
.desktop {
  position: relative;
  flex: 1;
  overflow: hidden;
  background: radial-gradient(ellipse at 36% 50%, #04204e 0, #03163a 35%, #010c20 62%, #010814 100%);
}
.bloom { position: absolute; left: 74px; bottom: 0; width: 200px; height: 160px; }
.shortcuts { display: flex; flex-direction: column; gap: 32px; width: 74px; padding-top: 7px; }
.shortcut { display: flex; flex-direction: column; align-items: center; gap: 1px; line-height: 15px; text-align: center; text-shadow: 0 1px 2px #000; }
.badged { position: relative; margin-bottom: 2px; }
.arrow { position: absolute; left: 0; bottom: 0; width: 13px; height: 13px; }

.window {
  position: absolute;
  width: 786px;
  height: 593px;
  display: flex;
  flex-direction: column;
  background: #191919;
  border: 1px solid #404040;
  box-shadow: 0 4px 16px rgba(0, 0, 0, .5);
}
.window-back { left: 82px; top: 23px; }
.window-front { left: 266px; top: 299px; }
.bare { display: flex; align-items: center; justify-content: center; width: 32px; height: 32px; flex: none; }
.dim { color: #747474; }
.off { opacity: .42; }

.titlebar { display: flex; align-items: flex-end; height: 39px; padding-left: 8px; background: #202020; }
.tab { display: flex; align-items: center; width: 240px; height: 31px; padding-left: 9px; padding-right: 5px; background: #2c2c2c; border-radius: 8px 8px 0 0; }
.tab-name { flex: 1; margin-left: 10px; font-weight: 600; }
.add { margin-left: 7px; }
.caption { display: flex; align-self: flex-start; gap: 14px; margin-left: auto; padding-right: 7px; height: 28px; align-items: center; color: #8c8c8c; }
.window-front .caption { color: #fff; }

.navbar { display: flex; align-items: center; gap: 16px; height: 48px; padding: 0 11px; background: #2c2c2c; border-bottom: 1px solid #404040; }
.address, .find { display: flex; align-items: center; height: 32px; border-radius: 4px; background: #383838; font-size: 13px; }
.address { flex: 1; margin-left: -3px; padding-left: 14px; }
.address .crumb { margin: 0 18px; }
.find { flex: 0 0 265px; margin-left: -9px; padding: 0 13px 0 16px; }
.find input { flex: 1; min-width: 0; }
input::placeholder { color: #c8c8c8; opacity: 1; }

.toolbar { display: flex; align-items: center; height: 55px; padding: 0 15px 0 11px; border-bottom: 1px solid #404040; }
.tool { display: flex; align-items: center; gap: 8px; height: 36px; padding-left: 10px; border-radius: 4px; flex: none; }
.tool .ic8 { margin-left: -4px; color: #b8b8b8; }
.hover { background: #2a2a2a; }
.tool-new { width: 80px; }
.tool-sort { width: 79px; margin-right: 8px; }
.tool-view { width: 83px; }
.tool-details { width: 80px; margin-left: auto; }
.more { width: 36px; }
.rule { width: 1px; height: 32px; margin: 0 6px 0 7px; background: #303030; }
.icons { display: flex; gap: 16px; padding: 0 3px 0 4px; }

.body { flex: 1; min-height: 0; display: flex; }
.side { display: flex; flex: 0 0 159px; padding-left: 3px; border-right: 1px solid #2b2b2b; overflow: hidden; }
.places { flex: 0 0 136px; padding-top: 6px; }
.place { display: flex; align-items: center; height: 32px; padding: 0 3px 0 9px; }
.on { background: #333; }
.twist { width: 22px; color: #8a8a8a; }
.place-name { flex: 1; margin-left: 5px; }
.places hr { height: 1px; margin: 16px 8px 15px 7px; border: 0; background: #404040; }
.vbar { width: 2px; margin: 17px 0 47px 8px; border-radius: 1px; background: #9a9a9a; }

.files { flex: 1; display: flex; flex-direction: column; align-items: flex-start; padding: 0 8px 6px 4px; }
table { width: 100%; table-layout: fixed; border-spacing: 0; font-size: 11px; }
.c-date { width: 144px; }
.c-type { width: 120px; }
.c-size { width: 81px; }
th { position: relative; height: 25px; padding: 0 6px; border-left: 1px solid #5c5c5c; text-align: left; font-weight: 400; color: #dedede; }
th:first-child { padding-left: 27px; border-left: 0; }
th:last-child { border-right: 1px solid #5c5c5c; }
.sorted .ic8 { position: absolute; left: 67px; top: 0; color: #9a9a9a; }
td { height: 28px; padding: 0 6px 0 7px; border-bottom: 4px solid transparent; background-clip: padding-box; white-space: nowrap; color: #dedede; }
td:first-child { padding-left: 4px; border-left: 11px solid transparent; color: #fff; font-size: 12px; }
td:last-child { padding-right: 4px; border-right: 3px solid transparent; text-align: right; }
td svg { display: inline-block; vertical-align: middle; margin-right: 4px; }
.hot td { background-color: #333; }
.group td, .group td:first-child { height: 35px; padding: 3px 0 0 2px; border-left: 0; border-bottom: 0; text-align: left; font-size: 14px; }
.group svg { margin-right: 4px; }
.hbar { width: 420px; height: 2px; margin: auto 0 0 14px; background: #9a9a9a; }
.status { display: flex; align-items: center; height: 22px; padding-left: 14px; font-size: 11px; color: #dedede; }
.tick { width: 1px; height: 11px; margin: 0 10px; background: #fff; }
.faint { margin-left: 6px; color: #a8a8a8; }

.marker { position: absolute; left: 433px; top: 498px; width: 497px; height: 31px; border: 3px solid #f00; }

.taskbar { display: flex; align-items: center; justify-content: center; flex: none; height: 48px; padding-bottom: 1px; border-top: 1px solid #404040; background: #1c1c1c; }
.dock { display: flex; align-items: center; margin-left: auto; }
.tasksearch { display: flex; align-items: center; gap: 10px; width: 220px; height: 32px; margin: 0 4px 0 9px; padding: 0 11px; border-radius: 16px; border-top: 1px solid #555; background: #3a3a3a; font-size: 13px; }
.tasksearch input { flex: 1; min-width: 0; }
.app { width: 40px; height: 40px; margin-right: 4px; }
.running { position: relative; background: #2a2a2a; border-radius: 4px; }
.running::after { content: ""; position: absolute; left: 12px; bottom: 1px; width: 16px; height: 3px; border-radius: 2px; background: #4cc2ff; }
.tray { display: flex; align-items: center; flex: 0 1 309px; justify-content: flex-end; padding-right: 12px; }
.tray .volume { width: 22px; margin-left: -2px; }

.brand { position: absolute; right: 37px; bottom: 33px; display: flex; align-items: center; gap: 7px; color: #d07f2c; font: 700 18px/24px Roboto, sans-serif; }
.hex { width: 50px; height: 56px; }
.hex-letter { font: 700 40px "Liberation Sans", sans-serif; fill: #0a1238; stroke: #0a1238; stroke-width: 2px; stroke-linejoin: round; }
```
